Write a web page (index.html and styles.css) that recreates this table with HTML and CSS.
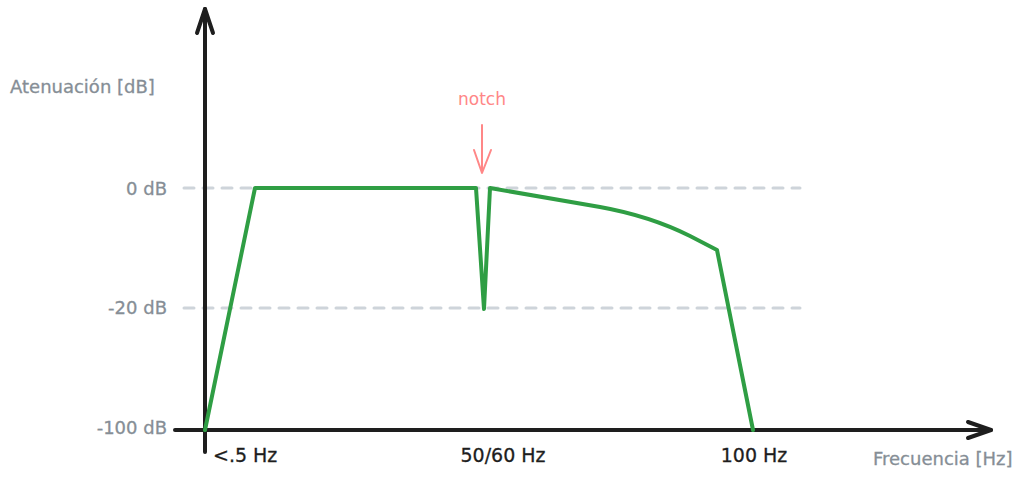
FILE: index.html
```html
<!DOCTYPE html>
<html lang="es">
<head>
<meta charset="utf-8">
<title>Filtro</title>
<link rel="stylesheet" href="styles.css">
</head>
<body>
<main class="canvas">
<svg class="chart" width="1024" height="480" viewBox="0 0 1024 480" xmlns="http://www.w3.org/2000/svg">
  <!-- grid lines -->
  <line class="grid" x1="184" y1="188" x2="800" y2="188"/>
  <line class="grid" x1="184" y1="308" x2="800" y2="308"/>

  <!-- axes -->
  <line class="axis" x1="205" y1="452" x2="205" y2="9"/>
  <polyline class="axis" points="197,33 205,9 213,33"/>
  <line class="axis" x1="175" y1="430" x2="991" y2="430"/>
  <polyline class="axis" points="968,422 991,430 968,438"/>

  <!-- response curve -->
  <path class="curve" d="M205,430 L255,188 L476,188 L484,309 L490,188 Q560,200 600,207 Q650,216 690,236 L717,250 L753,430"/>

  <!-- notch annotation -->
  <line class="note-line" x1="482" y1="125" x2="482" y2="172"/>
  <polyline class="note-line" points="474,150 482,173 491,150"/>
  <text class="note" x="482" y="105">notch</text>

  <!-- labels -->
  <text class="label" x="10" y="93">Atenuación [dB]</text>
  <text class="label tick-y" x="167" y="195">0 dB</text>
  <text class="label tick-y" x="167" y="314">-20 dB</text>
  <text class="label tick-y" x="167" y="434">-100 dB</text>
  <text class="label" x="873" y="465">Frecuencia [Hz]</text>

  <text class="tick-x start" x="213" y="462">&lt;.5 Hz</text>
  <text class="tick-x" x="503" y="462">50/60 Hz</text>
  <text class="tick-x" x="754" y="462">100 Hz</text>
</svg>
</main>
</body>
</html>
```
FILE: styles.css
```css
html, body {
  margin: 0;
  padding: 0;
  background: #ffffff;
}

.canvas {
  width: 1024px;
  height: 480px;
  overflow: hidden;
}

.chart {
  display: block;
  font-family: "DejaVu Sans", "Liberation Sans", sans-serif;
}

.grid {
  stroke: #ced4da;
  stroke-width: 3;
  stroke-dasharray: 10 9;
  stroke-linecap: round;
}

.axis {
  stroke: #1e1e1e;
  stroke-width: 4;
  fill: none;
  stroke-linecap: round;
  stroke-linejoin: round;
}

.curve {
  stroke: #2f9e44;
  stroke-width: 4;
  fill: none;
  stroke-linejoin: round;
  stroke-linecap: round;
}

.note-line {
  stroke: #ff8787;
  stroke-width: 2;
  fill: none;
  stroke-linecap: round;
  stroke-linejoin: round;
}

.note {
  fill: #ff8787;
  font-size: 17px;
  text-anchor: middle;
}

.label {
  fill: #868e96;
  font-size: 18px;
  stroke: #868e96;
  stroke-width: 0.3;
}

.tick-y {
  text-anchor: end;
}

.tick-x {
  fill: #1e1e1e;
  stroke: #1e1e1e;
  stroke-width: 0.3;
  font-size: 19px;
  text-anchor: middle;
}

.tick-x.start {
  text-anchor: start;
}
```
